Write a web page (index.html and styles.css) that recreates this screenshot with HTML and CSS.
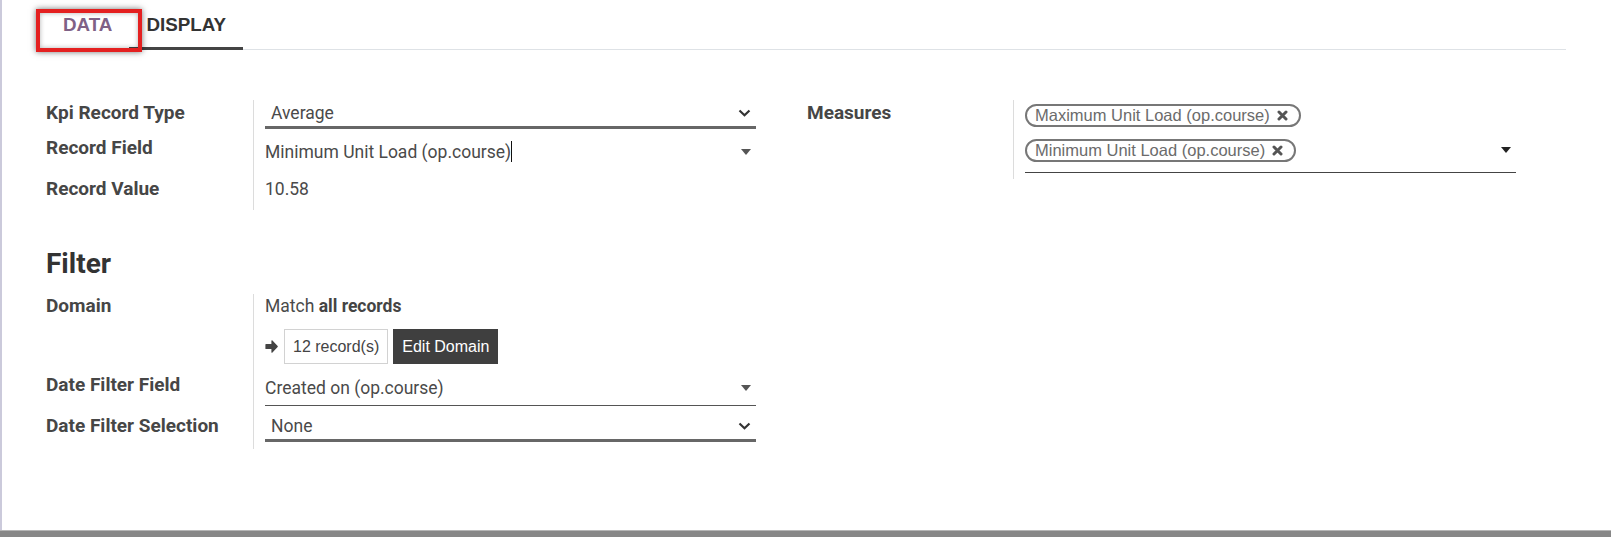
FILE: index.html
```html
<!DOCTYPE html>
<html>
<head>
<meta charset="utf-8">
<link rel="stylesheet" href="styles.css">
</head>
<body>
<div class="frame">
  <nav class="tabs">
    <a class="tab tab-data">DATA</a>
    <a class="tab tab-display">DISPLAY</a>
  </nav>
  <div class="highlight"></div>
  <div class="sheet">
    <div class="groups">
      <div class="group group-left">
        <div class="lbl r1">Kpi Record Type</div>
        <div class="val r1">
          <div class="select"><span>Average</span>
            <svg class="chev" width="13" height="8" viewBox="0 0 13 8"><path d="M1.5 1.5 L6.5 6.2 L11.5 1.5" fill="none" stroke="#333" stroke-width="2.2"/></svg>
          </div>
        </div>
        <div class="lbl r2">Record Field</div>
        <div class="val r2">
          <div class="m2o"><span>Minimum Unit Load (op.course)<span class="cursor"></span></span>
            <svg class="tri" width="10" height="6" viewBox="0 0 10 6"><path d="M0 0 H10 L5 6 Z" fill="#555"/></svg>
          </div>
        </div>
        <div class="lbl r3">Record Value</div>
        <div class="val r3">10.58</div>
      </div>
      <div class="group group-right">
        <div class="lbl r1">Measures</div>
        <div class="val rm">
          <div class="m2m">
            <div class="tags">
              <span class="tag">Maximum Unit Load (op.course)<svg class="x" width="11" height="11" viewBox="0 0 11 11"><path d="M2 2 L9 9 M9 2 L2 9" stroke="#555" stroke-width="3" stroke-linecap="round"/></svg></span>
              <span class="tag">Minimum Unit Load (op.course)<svg class="x" width="11" height="11" viewBox="0 0 11 11"><path d="M2 2 L9 9 M9 2 L2 9" stroke="#555" stroke-width="3" stroke-linecap="round"/></svg></span>
            </div>
            <svg class="tri tri-m" width="10" height="6" viewBox="0 0 10 6"><path d="M0 0 H10 L5 6 Z" fill="#222"/></svg>
          </div>
        </div>
      </div>
    </div>

    <h2 class="heading">Filter</h2>

    <div class="groups">
      <div class="group group-left">
        <div class="lbl d1">Domain</div>
        <div class="val d1">
          <div class="match">Match <b>all records</b></div>
          <div class="records">
            <svg class="arrow" width="13" height="15" viewBox="0 0 13 15"><path d="M1 5.6 H7 V1.8 L12.2 7.5 L7 13.2 V9.4 H1 Z" fill="#444" stroke="#444" stroke-width="1.2" stroke-linejoin="round"/></svg>
            <span class="count">12 record(s)</span>
            <span class="btn">Edit Domain</span>
          </div>
        </div>
        <div class="lbl d2">Date Filter Field</div>
        <div class="val d2">
          <div class="m2o line"><span>Created on (op.course)</span>
            <svg class="tri" width="10" height="6" viewBox="0 0 10 6"><path d="M0 0 H10 L5 6 Z" fill="#555"/></svg>
          </div>
        </div>
        <div class="lbl d3">Date Filter Selection</div>
        <div class="val d3">
          <div class="select"><span>None</span>
            <svg class="chev" width="13" height="8" viewBox="0 0 13 8"><path d="M1.5 1.5 L6.5 6.2 L11.5 1.5" fill="none" stroke="#333" stroke-width="2.2"/></svg>
          </div>
        </div>
      </div>
    </div>
  </div>
</div>
<div class="bottom-bar"></div>
</body>
</html>
```

FILE: styles.css
```css
html, body {
  margin: 0;
  padding: 0;
  background: #fff;
  overflow: hidden;
}
body {
  width: 1611px;
  height: 537px;
  font-family: Roboto, "Liberation Sans", sans-serif;
  color: #4c4c4c;
}
.frame {
  position: relative;
  height: 530px;
  box-sizing: border-box;
  border-left: 2px solid #cbcadb;
}
.tabs {
  display: flex;
  margin-left: 44px;
  width: 1520px;
  border-bottom: 1px solid #dee2e6;
}
.tab {
  display: block;
  padding: 15px 17px 12px;
  margin-bottom: -1px;
  font: bold 18.8px/20px "Liberation Sans", Arial, sans-serif;
  border-bottom: 3px solid transparent;
  color: #333;
}
.tab-data {
  color: #7f6186;
}
.tab-display {
  border-bottom-color: #444;
}
.highlight {
  position: absolute;
  left: 34px;
  top: 9px;
  width: 106px;
  height: 43px;
  box-sizing: border-box;
  border: 4px solid #e42020;
  box-shadow: 0 0 6px rgba(0, 0, 0, 0.55), inset 0 0 5px rgba(0, 0, 0, 0.3);
}
.sheet {
  padding-left: 44px;
  padding-top: 50px;
}
.groups {
  display: flex;
  align-items: flex-start;
  gap: 51px;
}
.group {
  display: grid;
}
.group-left {
  width: 710px;
  grid-template-columns: 207px 1fr;
}
.group-right {
  width: 709px;
  grid-template-columns: 206px 1fr;
}
.lbl {
  font-weight: bold;
  font-size: 19px;
  line-height: 26px;
  color: #464646;
}
.val {
  border-left: 1px solid #dcdcdc;
  padding-left: 11px;
  font-size: 17.5px;
  line-height: 26px;
  color: #4a4a4a;
}
.lbl.r1 { padding-top: 0; }
.lbl.r2 { padding-top: 6px; }
.val.r2 { padding-top: 10px; padding-bottom: 6px; }
.lbl.r3, .val.r3 { padding-top: 5px; padding-bottom: 8px; }

.select {
  display: flex;
  justify-content: space-between;
  align-items: center;
  height: 26px;
  padding: 0 5px 0 6px;
  border-bottom: 3px solid #676767;
}
.m2o {
  display: flex;
  justify-content: space-between;
  align-items: center;
  padding-right: 5px;
}
.m2o.line {
  padding-bottom: 4px;
  border-bottom: 1px solid #555;
}
.cursor {
  display: inline-block;
  width: 1px;
  height: 21px;
  background: #111;
  vertical-align: -4px;
}
.tri, .chev { display: block; }

.val.rm { padding-top: 4px; padding-bottom: 6px; }
.m2m {
  display: flex;
  justify-content: space-between;
  padding-bottom: 10px;
  border-bottom: 1px solid #444;
}
.tags {
  display: flex;
  flex-direction: column;
  align-items: flex-start;
  gap: 12px;
}
.tag {
  display: inline-flex;
  align-items: center;
  height: 19px;
  padding: 0 11px 0 8px;
  border: 2px solid #777;
  border-radius: 12px;
  font: 16.5px/19px "Liberation Sans", Arial, sans-serif;
  color: #6b6b6b;
}
.tag .x {
  margin-left: 7px;
}
.tri-m {
  align-self: flex-end;
  margin-bottom: 9px;
  margin-right: 5px;
}

.heading {
  margin: 37px 0 13px;
  font-size: 28px;
  line-height: 34px;
  font-weight: bold;
  color: #333;
}

.lbl.d1, .val.d1 { line-height: 24px; }
.val.d1 { padding-bottom: 3px; }
.match b { color: #444; }
.records {
  display: flex;
  align-items: center;
  margin-top: 11px;
  height: 35px;
}
.arrow {
  display: block;
  margin-left: 0;
}
.count {
  margin-left: 6px;
  height: 35px;
  box-sizing: border-box;
  padding: 0 8px;
  border: 1px solid #d2d2d2;
  font: 16px/33px "Liberation Sans", Arial, sans-serif;
  color: #444;
}
.btn {
  margin-left: 5px;
  height: 35px;
  padding: 0 9px;
  background: #3f3f3f;
  color: #fff;
  font: 16px/35px "Liberation Sans", Arial, sans-serif;
}
.lbl.d2 { padding-top: 5px; }
.val.d2 { padding-top: 8px; }
.lbl.d3 { padding-top: 7px; }
.val.d3 { padding-top: 7px; padding-bottom: 7px; }

.bottom-bar {
  height: 7px;
  background: #878787;
  border-top: 1px solid #b5b5b5;
  box-sizing: border-box;
}
```
